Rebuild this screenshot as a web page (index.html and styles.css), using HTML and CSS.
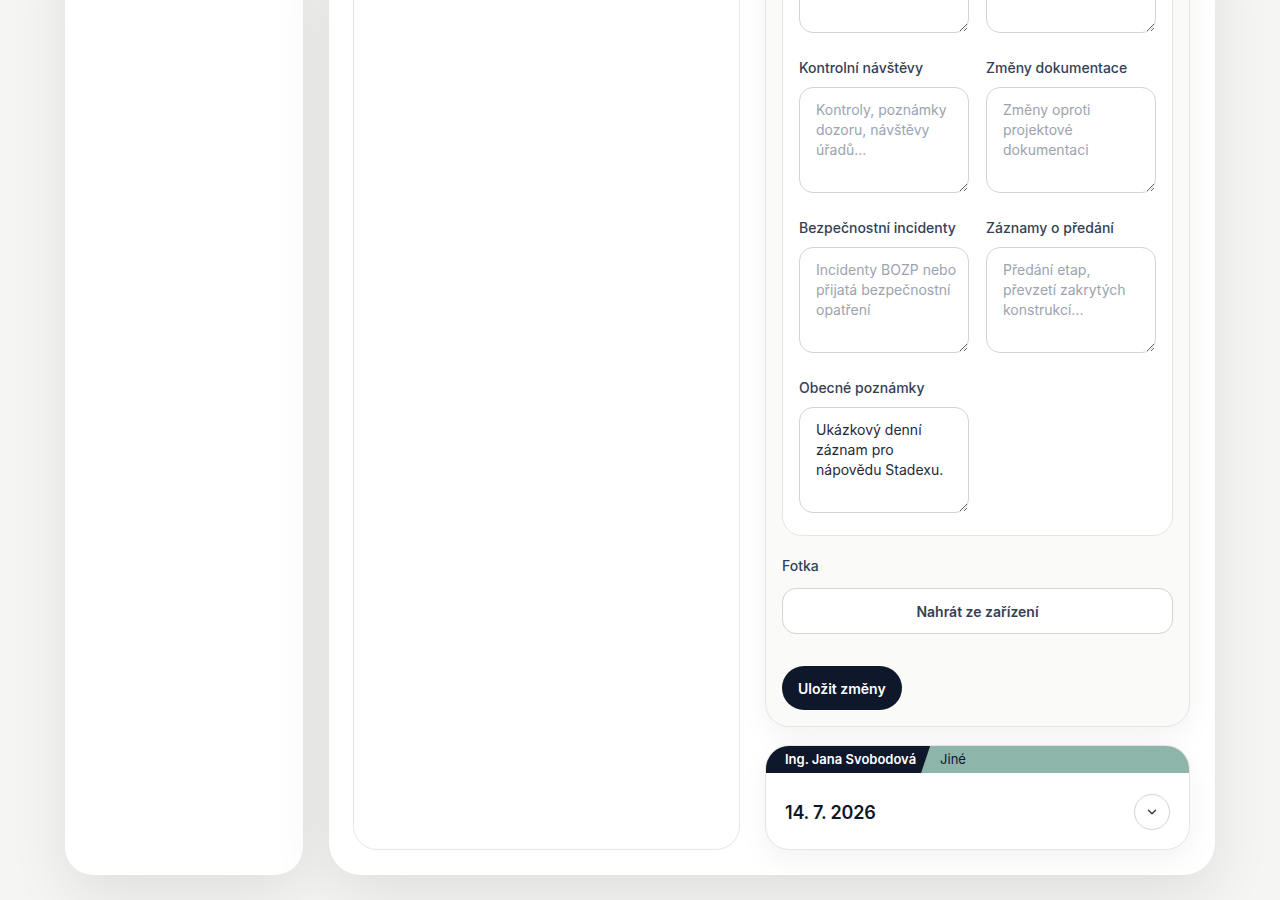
FILE: index.html
```html
<!DOCTYPE html>
<html lang="cs">
<head>
  <meta charset="UTF-8">
  <meta name="viewport" content="width=device-width, initial-scale=1.0">
  <title>Stavební deník</title>
  <link rel="stylesheet" href="styles.css">
</head>
<body>
  <div class="page">
    <aside class="sidebar"></aside>

    <main class="main-card">
      <section class="list-panel"></section>

      <section class="detail-column">
        <form class="entry-form">
          <div class="fields-card">
            <div class="field">
              <label>Provedené práce</label>
              <textarea placeholder="Popis prací"></textarea>
            </div>
            <div class="field">
              <label>Materiál</label>
              <textarea placeholder="Dodávky"></textarea>
            </div>
            <div class="field">
              <label>Kontrolní návštěvy</label>
              <textarea placeholder="Kontroly, poznámky dozoru, návštěvy úřadů..."></textarea>
            </div>
            <div class="field">
              <label>Změny dokumentace</label>
              <textarea placeholder="Změny oproti projektové dokumentaci"></textarea>
            </div>
            <div class="field">
              <label>Bezpečnostní incidenty</label>
              <textarea placeholder="Incidenty BOZP nebo přijatá bezpečnostní opatření"></textarea>
            </div>
            <div class="field">
              <label>Záznamy o předání</label>
              <textarea placeholder="Předání etap, převzetí zakrytých konstrukcí..."></textarea>
            </div>
            <div class="field">
              <label>Obecné poznámky</label>
              <textarea>Ukázkový denní záznam pro nápovědu Stadexu.</textarea>
            </div>
          </div>

          <div class="photo">
            <label>Fotka</label>
            <button type="button" class="upload-btn">Nahrát ze zařízení</button>
          </div>

          <div class="actions">
            <button type="button" class="save-btn">Uložit změny</button>
          </div>
        </form>

        <article class="entry">
          <div class="entry-tags">
            <span class="tag-author">Ing. Jana Svobodová</span>
            <span class="tag-type">Jiné</span>
          </div>
          <div class="entry-body">
            <span class="entry-date">14. 7. 2026</span>
            <button type="button" class="toggle-btn" aria-label="Rozbalit">
              <svg width="14" height="14" viewBox="0 0 24 24" fill="none" stroke="#334155" stroke-width="2.5" stroke-linecap="round" stroke-linejoin="round"><path d="M6 9l6 6 6-6"/></svg>
            </button>
          </div>
        </article>
      </section>
    </main>
  </div>
</body>
</html>
```

FILE: styles.css
```css
* {
  box-sizing: border-box;
}
html, body {
  height: 100%;
}
body {
  margin: 0;
  overflow: hidden;
  font-family: Inter, "Noto Sans", Arial, sans-serif;
  color: #0f172a;
  background-color: #f5f5f3;
}
.page {
  display: flex;
  gap: 26px;
  height: 960px;
  margin-top: -60px;
  padding: 0 65px 25px;
}
.sidebar {
  width: 238px;
  flex-shrink: 0;
  background: #fff;
  border-radius: 28px;
  box-shadow: 0 20px 60px rgba(0, 0, 0, 0.09);
}
.main-card {
  flex: 1;
  display: grid;
  grid-template-columns: 387px 1fr;
  gap: 25px;
  padding: 24px 25px 25px 24px;
  background: #fff;
  border-radius: 32px;
  box-shadow: 0 20px 60px rgba(0, 0, 0, 0.09);
}
.list-panel {
  border: 1px solid #e7e7e5;
  border-radius: 24px;
  background: #fff;
}
.detail-column {
  display: flex;
  flex-direction: column;
  justify-content: flex-end;
  gap: 18px;
  min-height: 0;
}
.entry-form {
  flex-shrink: 0;
  padding: 16px;
  background: #fafaf9;
  border: 1px solid #e7e5e4;
  border-radius: 24px;
  box-shadow: 0 10px 30px rgba(0, 0, 0, 0.05);
}
.fields-card {
  display: grid;
  grid-template-columns: 170px 170px;
  justify-content: space-between;
  row-gap: 25px;
  padding: 16px 16px 22px;
  background: #fff;
  border: 1px solid #e7e5e4;
  border-radius: 20px;
}
.field label,
.photo label {
  display: block;
  margin-bottom: 9px;
  font-size: 14px;
  line-height: 20px;
  font-weight: 500;
  color: #334155;
}
.field textarea {
  display: block;
  width: 100%;
  height: 106px;
  padding: 12px 10px 12px 16px;
  font-family: inherit;
  font-size: 14px;
  line-height: 20px;
  color: #1e293b;
  background: #fff;
  border: 1px solid #d6d3d1;
  border-radius: 14px;
  outline: none;
}
.field textarea::placeholder {
  color: #9ca3af;
}
.photo {
  margin-top: 20px;
}
.photo label {
  margin-bottom: 12px;
}
.upload-btn {
  display: block;
  width: 100%;
  height: 46px;
  font-family: inherit;
  font-size: 14px;
  font-weight: 600;
  color: #334155;
  background: #fff;
  border: 1px solid #d6d3d1;
  border-radius: 14px;
}
.actions {
  margin-top: 32px;
}
.save-btn {
  height: 44px;
  padding: 0 16px;
  font-family: inherit;
  font-size: 14px;
  font-weight: 600;
  color: #fff;
  background: #0f172a;
  border: none;
  border-radius: 22px;
}
.entry {
  flex-shrink: 0;
  overflow: hidden;
  background: #fff;
  border: 1px solid #e7e5e4;
  border-radius: 24px;
  box-shadow: 0 10px 30px rgba(0, 0, 0, 0.05);
}
.entry-tags {
  display: flex;
  height: 27px;
  background: #8db5a9;
  font-size: 13px;
  line-height: 27px;
}
.tag-author {
  padding: 0 14px 0 19px;
  font-weight: 600;
  color: #fff;
  background: #0f172a;
  clip-path: polygon(0 0, 100% 0, calc(100% - 9px) 100%, 0 100%);
}
.tag-type {
  padding-left: 10px;
  color: #0f172a;
}
.entry-body {
  display: flex;
  align-items: center;
  justify-content: space-between;
  padding: 21px 19px 19px 19px;
}
.entry-date {
  font-size: 18px;
  font-weight: 600;
  letter-spacing: -0.2px;
  color: #0f172a;
}
.toggle-btn {
  display: flex;
  align-items: center;
  justify-content: center;
  width: 36px;
  height: 36px;
  padding: 0;
  background: #fff;
  border: 1px solid #d6d3d1;
  border-radius: 50%;
}
```
